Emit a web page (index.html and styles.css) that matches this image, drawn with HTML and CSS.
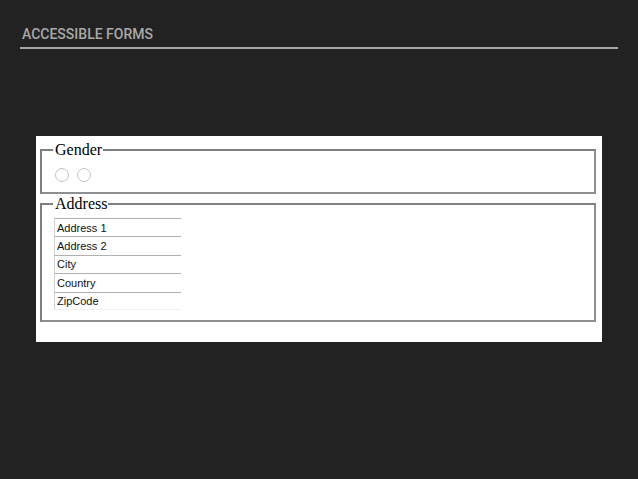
FILE: index.html
```html
<!DOCTYPE html>
<html>
<head>
<meta charset="utf-8">
<link rel="stylesheet" href="styles.css">
</head>
<body>
<header class="header"><h1 class="title">ACCESSIBLE FORMS</h1></header>
<main class="panel">
  <fieldset class="group group-gender">
    <legend class="legend">Gender</legend>
    <div class="radios">
      <input class="radio" type="radio" name="g" aria-label="Male">
      <input class="radio" type="radio" name="g" aria-label="Female">
    </div>
  </fieldset>
  <fieldset class="group group-address">
    <legend class="legend">Address</legend>
    <div class="fields">
      <input class="field" type="text" value="Address 1" aria-label="Address 1">
      <input class="field" type="text" value="Address 2" aria-label="Address 2">
      <input class="field" type="text" value="City" aria-label="City">
      <input class="field" type="text" value="Country" aria-label="Country">
      <input class="field" type="text" value="ZipCode" aria-label="ZipCode">
    </div>
  </fieldset>
</main>
</body>
</html>
```
FILE: styles.css
```css
html, body {
  margin: 0;
  padding: 0;
  background: #222222;
  height: 100%;
}
.header {
  margin: 0 20px;
  padding: 26px 0 0 2px;
  border-bottom: 2px solid #a6a6a6;
  height: 21px;
}
.title {
  margin: 0;
  font-family: Roboto, "Liberation Sans", sans-serif;
  font-weight: 500;
  font-size: 14px;
  line-height: 16px;
  color: #a9a9a9;
  letter-spacing: 0;
}
.panel {
  margin: 87px 0 0 36px;
  width: 566px;
  box-sizing: border-box;
  height: 206px;
  background: #ffffff;
  padding: 5px 6px 0 4px;
}
.group {
  margin: 0;
  padding: 0 11px;
  border: 2px solid #8f8f8f;
  border-top-color: #7f7f7f;
  border-left-color: #7f7f7f;
}
.group-address {
  margin-top: 1px;
}
.legend {
  font-family: "Liberation Serif", serif;
  font-size: 16px;
  line-height: 18px;
  padding: 0 1px 0 2px;
  color: #000;
}
.radios {
  display: flex;
  gap: 8px;
  padding: 9px 0 10px 2px;
}
.radio {
  appearance: none;
  -webkit-appearance: none;
  margin: 0;
  width: 14px;
  height: 14px;
  border: 1px solid #c4c4c4;
  border-radius: 50%;
  background: #fff;
}
.fields {
  display: flex;
  flex-direction: column;
  padding: 5px 0 10px 1px;
}
.field {
  box-sizing: border-box;
  width: 127px;
  height: 18.4px;
  margin: 0;
  padding: 0 0 0 2px;
  border: 0;
  border-top: 1px solid #b0b0b0;
  border-left: 1px solid #d4d4d4;
  font-family: "Liberation Sans", Arial, sans-serif;
  font-size: 11px;
  color: #111;
  background: #fff;
  outline: none;
}
.field:last-child {
  border-bottom: 1px solid #f0f0f0;
}
```
